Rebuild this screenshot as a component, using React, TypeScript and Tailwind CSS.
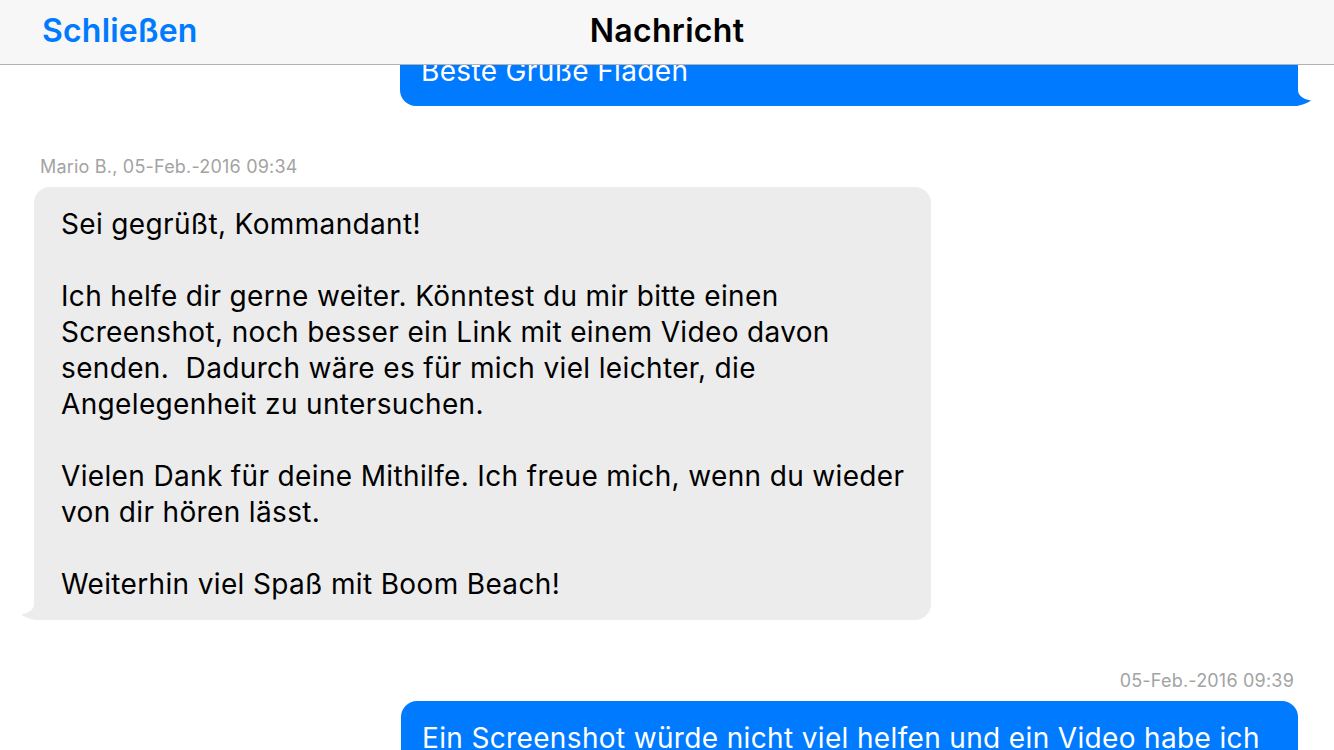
import React from 'react';

const font = { fontFamily: 'Inter, "Liberation Sans", Arial, sans-serif' };

function Tail({ side, color }: { side: 'left' | 'right'; color: string }) {
  if (side === 'left') {
    return (
      <svg
        className="absolute bottom-0 -left-[14px]"
        width="24"
        height="24"
        viewBox="0 0 24 24"
      >
        <path d="M14 0 L14 8 C14 13 10 17 1 18.5 C6 22 12 24 20 24 L24 24 L24 0 Z" fill={color} />
      </svg>
    );
  }
  return (
    <svg
      className="absolute bottom-0 -right-[14px]"
      width="24"
      height="24"
      viewBox="0 0 24 24"
    >
      <path d="M10 0 L10 8 C10 13 14 17 23 18.5 C18 22 12 24 4 24 L0 24 L0 0 Z" fill={color} />
    </svg>
  );
}

const grayLines = [
  'Sei gegrüßt, Kommandant!',
  '',
  'Ich helfe dir gerne weiter. Könntest du mir bitte einen',
  'Screenshot, noch besser ein Link mit einem Video davon',
  'senden.  Dadurch wäre es für mich viel leichter, die',
  'Angelegenheit zu untersuchen.',
  '',
  'Vielen Dank für deine Mithilfe. Ich freue mich, wenn du wieder',
  'von dir hören lässt.',
  '',
  'Weiterhin viel Spaß mit Boom Beach!',
];

export default function App() {
  return (
    <div className="w-[1334px] h-[750px] overflow-hidden bg-white flex flex-col" style={font}>
      {/* header */}
      <div className="relative z-10 h-[65px] shrink-0 bg-[#f7f7f7] border-b border-[#b2b2b2] flex items-center px-[42px]">
        <button className="text-[32px] font-semibold text-[#007aff] leading-none -mt-[3px] tracking-[0.2px]">
          Schließen
        </button>
        <div className="absolute left-0 right-0 text-center text-[32px] font-semibold text-black leading-none -mt-[3px] tracking-[0.3px] pointer-events-none">
          Nachricht
        </div>
      </div>

      {/* messages */}
      <div className="flex flex-col flex-1">
        <div className="flex justify-end pr-[36px] -mt-[40px]">
          <div className="relative w-[898px] bg-[#007aff] rounded-[16px] rounded-br-none pt-[28px] pb-[17px] px-[21px]">
            <div className="text-white text-[28px] leading-[36px] tracking-[0.35px] whitespace-pre">Beste Grüße Fladen</div>
            <Tail side="right" color="#007aff" />
          </div>
        </div>

        <div className="mt-[50px] pl-[40px] text-[18px] leading-[22px] tracking-[0.2px] text-[#a3a3a3]">
          Mario B., 05-Feb.-2016 09:34
        </div>
        <div className="mt-[9px] pl-[34px] flex">
          <div className="relative w-[897px] bg-[#ececec] rounded-[16px] rounded-bl-none pt-[19px] pb-[18px] px-[27px]">
            {grayLines.map((l, i) => (
              <div key={i} className="text-black text-[28px] leading-[36px] h-[36px] tracking-[0.35px] whitespace-pre">
                {l}
              </div>
            ))}
            <Tail side="left" color="#ececec" />
          </div>
        </div>

        <div className="mt-[50px] pr-[40px] text-right text-[18px] leading-[22px] tracking-[0.2px] text-[#a3a3a3]">
          05-Feb.-2016 09:39
        </div>
        <div className="mt-[9px] flex justify-end pr-[36px]">
          <div className="relative w-[897px] bg-[#007aff] rounded-[16px] pt-[19px] pb-[18px] px-[21px]">
            <div className="text-white text-[28px] leading-[36px] tracking-[0.35px] whitespace-pre">
              Ein Screenshot würde nicht viel helfen und ein Video habe ich
            </div>
          </div>
        </div>
      </div>
    </div>
  );
}
